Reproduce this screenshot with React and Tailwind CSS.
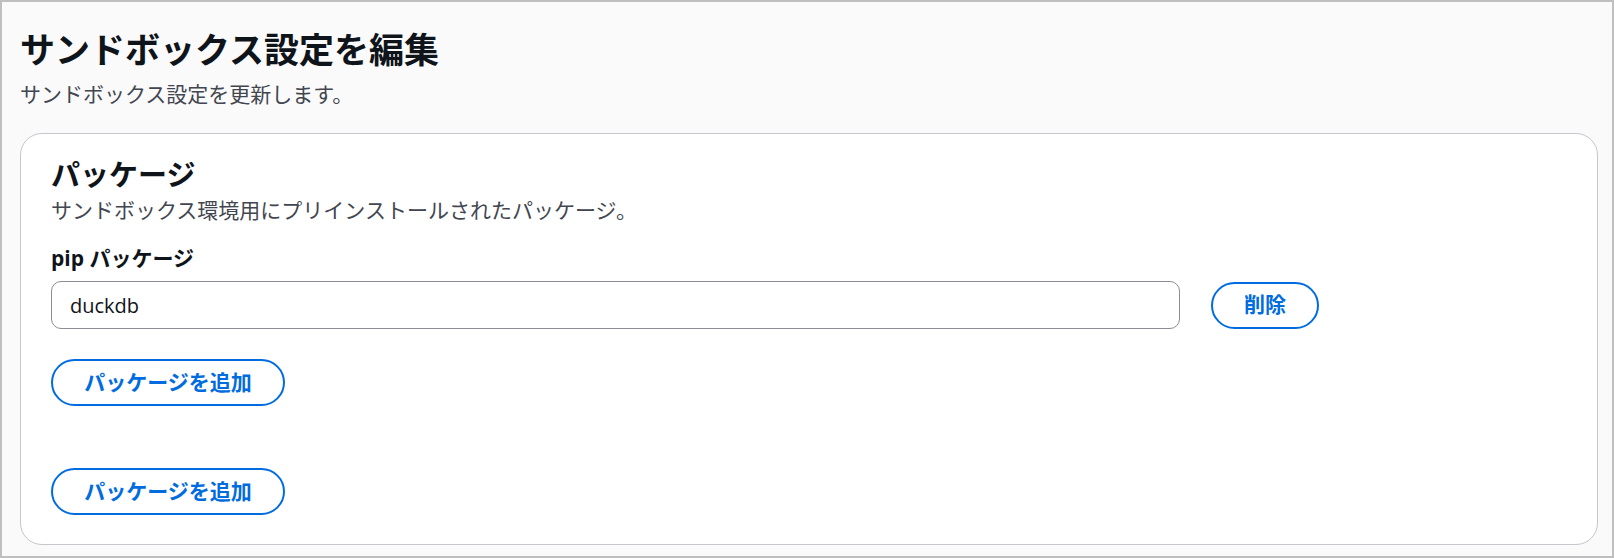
import React, { useState } from 'react';

const font = { fontFamily: '"Open Sans", "Noto Sans CJK JP", sans-serif' };

const PillButton = ({ children, className = '' }) => (
  <button
    type="button"
    className={`flex h-[47px] items-center justify-center rounded-full border-2 border-[#006ce0] bg-white text-[21px] font-bold text-[#006ce0] ${className}`}
  >
    {children}
  </button>
);

const App = () => {
  const [pkg, setPkg] = useState('duckdb');

  return (
    <div
      className="h-[558px] overflow-hidden border-2 border-[#bfbfbf] bg-[#fafafa] text-[#0f141a]"
      style={font}
    >
      <div className="pl-[18px] pr-[14px] pt-[25px]">
        <h1 className="text-[35px] font-bold leading-[46px]">サンドボックス設定を編集</h1>
        <p className="mt-[7px] text-[21px] leading-[28px] text-[#424650]">
          サンドボックス設定を更新します。
        </p>

        <div className="mt-[25px] h-[412px] rounded-[22px] border border-[#c6c6cd] bg-white px-[30px] pt-[23px]">
          <h2 className="text-[29px] font-bold leading-[36px]">パッケージ</h2>
          <p className="mt-[3px] text-[21px] leading-[28px] text-[#424650]">
            サンドボックス環境用にプリインストールされたパッケージ。
          </p>

          <div className="mt-[20px]">
            <label className="block text-[21px] font-bold leading-[28px]">pip パッケージ</label>
            <div className="mt-[9px] flex items-center gap-[31px]">
              <input
                className="h-[48px] w-[1129px] rounded-[10px] border border-[#8c8c94] bg-white px-[18px] text-[20px] text-[#0f141a] outline-none"
                value={pkg}
                onChange={(e) => setPkg(e.target.value)}
              />
              <PillButton className="w-[108px]">削除</PillButton>
            </div>
            <PillButton className="mt-[30px] w-[234px]">パッケージを追加</PillButton>
          </div>

          <PillButton className="mt-[62px] w-[234px]">パッケージを追加</PillButton>
        </div>
      </div>
    </div>
  );
};

export default App;
